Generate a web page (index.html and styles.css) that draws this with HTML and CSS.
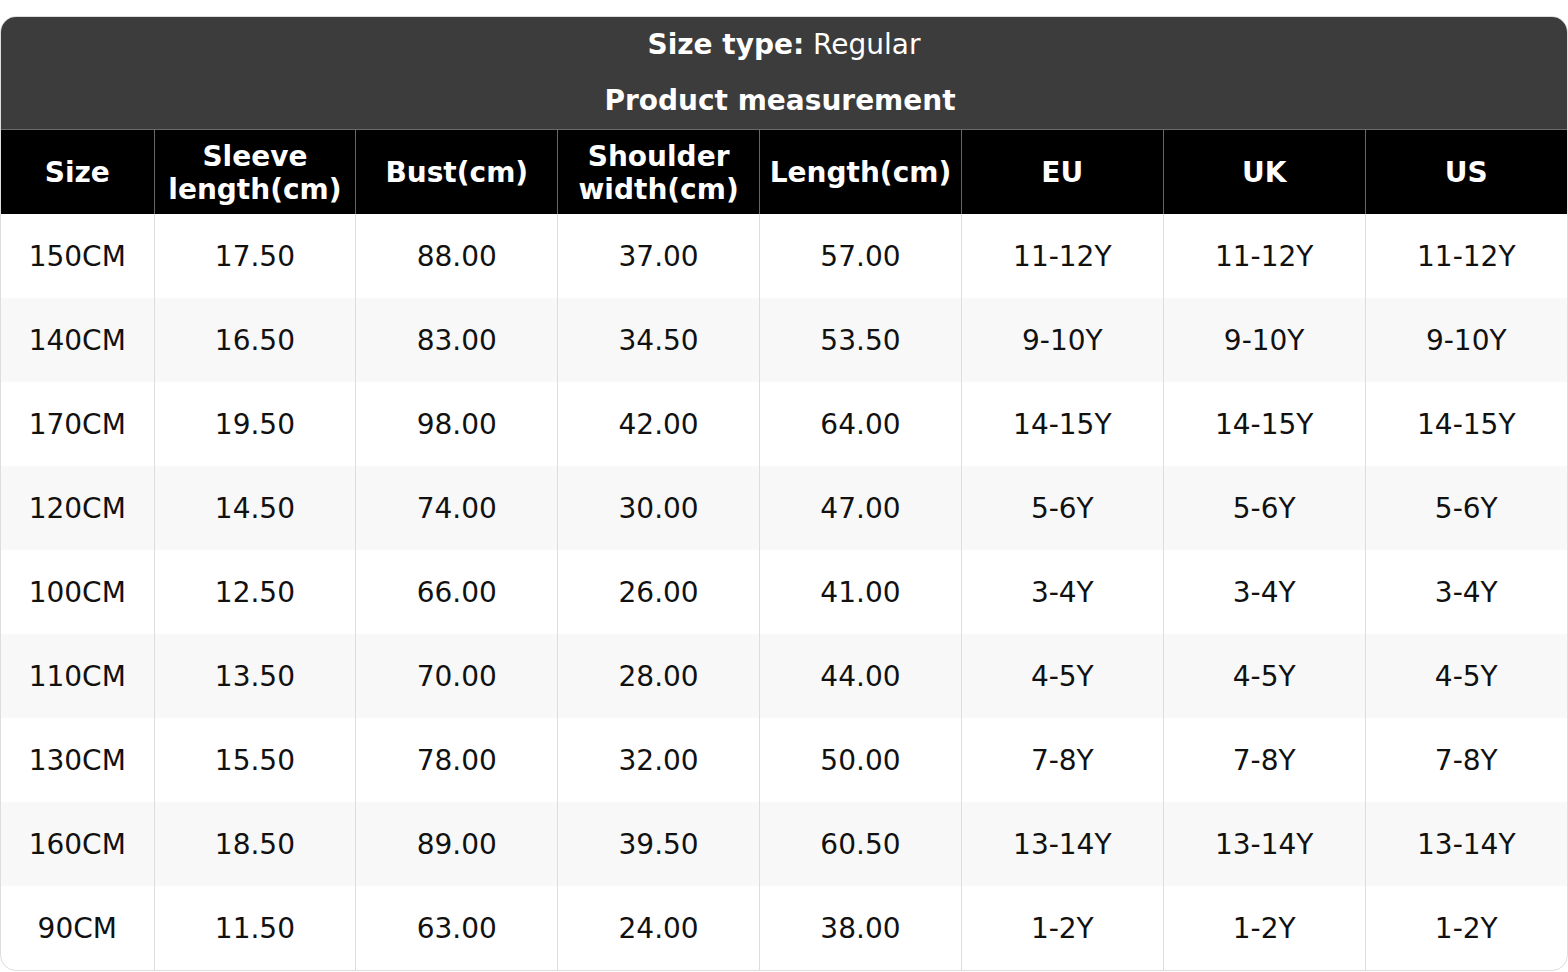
FILE: index.html
```html
<!DOCTYPE html>
<html lang="en">
<head>
<meta charset="utf-8">
<title>Size chart</title>
<link rel="stylesheet" href="styles.css">
</head>
<body>
<div class="page">
  <div class="card">
    <div class="head">
      <div class="head-line"><b>Size type:</b> Regular</div>
      <div class="head-line head-title"><b>Product measurement</b></div>
    </div>
    <table class="chart">
      <colgroup>
        <col class="c-size">
        <col><col><col><col><col><col><col>
      </colgroup>
      <thead>
        <tr>
          <th>Size</th>
          <th>Sleeve<br>length(cm)</th>
          <th>Bust(cm)</th>
          <th>Shoulder<br>width(cm)</th>
          <th>Length(cm)</th>
          <th>EU</th>
          <th>UK</th>
          <th>US</th>
        </tr>
      </thead>
      <tbody>
        <tr><td>150CM</td><td>17.50</td><td>88.00</td><td>37.00</td><td>57.00</td><td>11-12Y</td><td>11-12Y</td><td>11-12Y</td></tr>
        <tr><td>140CM</td><td>16.50</td><td>83.00</td><td>34.50</td><td>53.50</td><td>9-10Y</td><td>9-10Y</td><td>9-10Y</td></tr>
        <tr><td>170CM</td><td>19.50</td><td>98.00</td><td>42.00</td><td>64.00</td><td>14-15Y</td><td>14-15Y</td><td>14-15Y</td></tr>
        <tr><td>120CM</td><td>14.50</td><td>74.00</td><td>30.00</td><td>47.00</td><td>5-6Y</td><td>5-6Y</td><td>5-6Y</td></tr>
        <tr><td>100CM</td><td>12.50</td><td>66.00</td><td>26.00</td><td>41.00</td><td>3-4Y</td><td>3-4Y</td><td>3-4Y</td></tr>
        <tr><td>110CM</td><td>13.50</td><td>70.00</td><td>28.00</td><td>44.00</td><td>4-5Y</td><td>4-5Y</td><td>4-5Y</td></tr>
        <tr><td>130CM</td><td>15.50</td><td>78.00</td><td>32.00</td><td>50.00</td><td>7-8Y</td><td>7-8Y</td><td>7-8Y</td></tr>
        <tr><td>160CM</td><td>18.50</td><td>89.00</td><td>39.50</td><td>60.50</td><td>13-14Y</td><td>13-14Y</td><td>13-14Y</td></tr>
        <tr><td>90CM</td><td>11.50</td><td>63.00</td><td>24.00</td><td>38.00</td><td>1-2Y</td><td>1-2Y</td><td>1-2Y</td></tr>
      </tbody>
    </table>
  </div>
</div>
</body>
</html>
```
FILE: styles.css
```css
html, body {
  margin: 0;
  padding: 0;
  background: #ffffff;
}
body {
  font-family: "DejaVu Sans", Verdana, sans-serif;
  font-size: 28px;
  color: #111111;
}
.page {
  padding-top: 16px;
}
.card {
  border: 1px solid #dddddd;
  border-radius: 16px;
  overflow: hidden;
  background: #ffffff;
}
.head {
  background: #3c3c3c;
  color: #ffffff;
  text-align: center;
  border-bottom: 1px solid #6a6a6a;
}
.head-line {
  height: 56px;
  line-height: 56px;
}
.head-title {
  padding-right: 8px;
}
.head-line b {
  font-weight: bold;
}
.chart {
  width: 100%;
  border-collapse: collapse;
  table-layout: fixed;
}
.c-size {
  width: 153px;
}
.chart th {
  background: #000000;
  color: #ffffff;
  font-weight: bold;
  height: 84px;
  padding: 1px 0 0;
  line-height: 33px;
  border-left: 1px solid #666666;
  box-sizing: border-box;
}
.chart td {
  height: 84px;
  padding: 0;
  text-align: center;
  border-left: 1px solid #dddddd;
  box-sizing: border-box;
}
.chart th:first-child,
.chart td:first-child {
  border-left: none;
}
.chart tbody tr:nth-child(even) td {
  background: #f8f8f8;
}
```
